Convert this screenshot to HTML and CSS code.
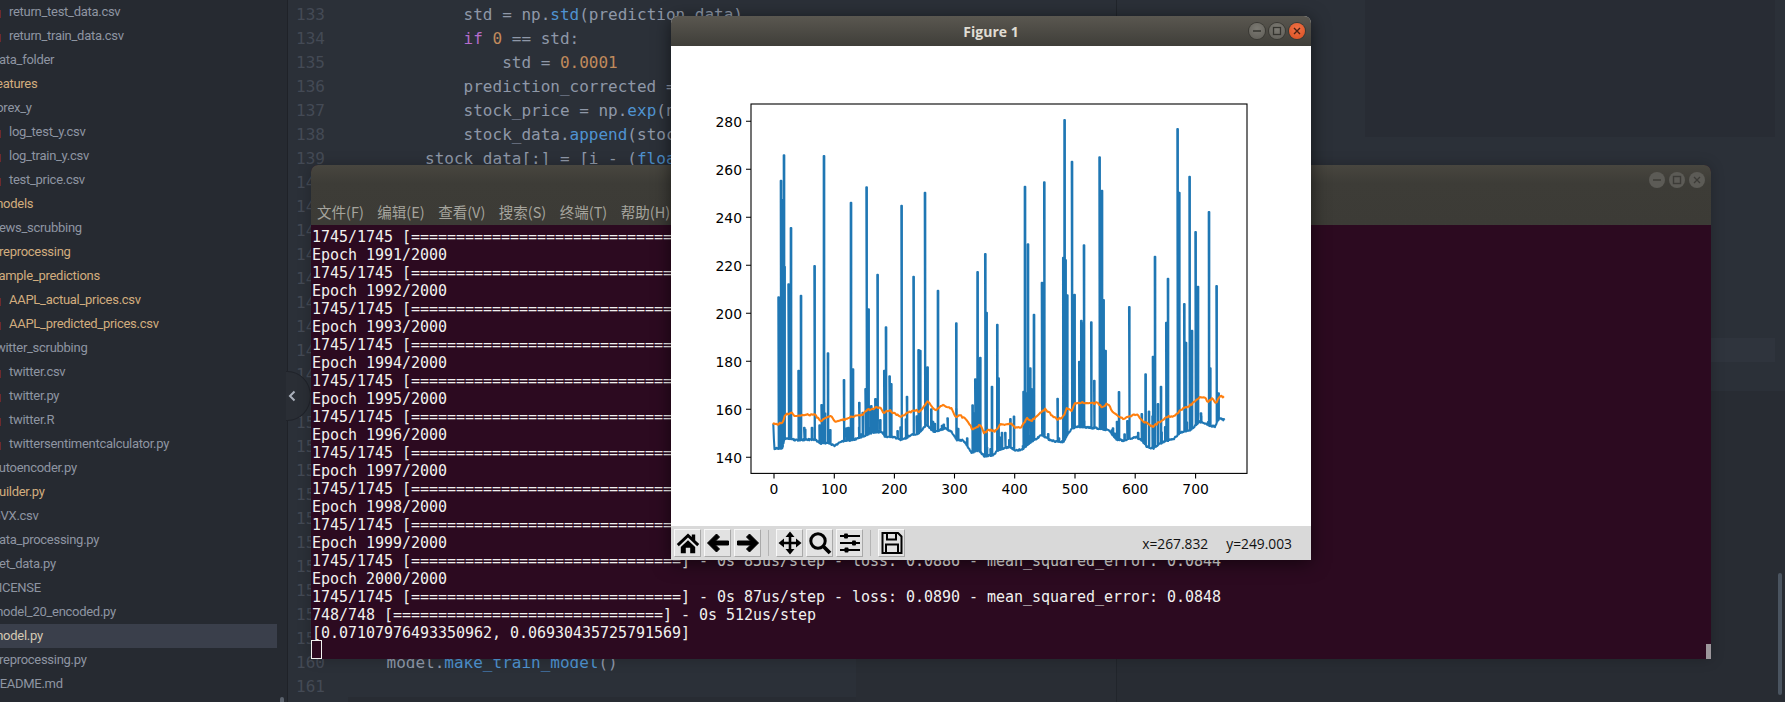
FILE: index.html
```html
<!DOCTYPE html>
<html lang="zh">
<head>
<meta charset="utf-8">
<title>Desktop</title>
<link rel="stylesheet" href="styles.css">
</head>
<body>
<div class="desktop">
  <div class="atom">
    <aside class="tree">
      <div class="row child">return_test_data.csv</div>
      <div class="row child">return_train_data.csv</div>
      <div class="row top">data_folder</div>
      <div class="row top mod">features</div>
      <div class="row top">forex_y</div>
      <div class="row child">log_test_y.csv</div>
      <div class="row child">log_train_y.csv</div>
      <div class="row child">test_price.csv</div>
      <div class="row top mod">models</div>
      <div class="row top">news_scrubbing</div>
      <div class="row top mod">preprocessing</div>
      <div class="row top mod">sample_predictions</div>
      <div class="row child mod">AAPL_actual_prices.csv</div>
      <div class="row child mod">AAPL_predicted_prices.csv</div>
      <div class="row top">twitter_scrubbing</div>
      <div class="row child">twitter.csv</div>
      <div class="row child">twitter.py</div>
      <div class="row child">twitter.R</div>
      <div class="row child">twittersentimentcalculator.py</div>
      <div class="row top">autoencoder.py</div>
      <div class="row top mod">builder.py</div>
      <div class="row top">GVX.csv</div>
      <div class="row top">data_processing.py</div>
      <div class="row top">get_data.py</div>
      <div class="row top">LICENSE</div>
      <div class="row top">model_20_encoded.py</div>
      <div class="row top selected">model.py</div>
      <div class="row top">preprocessing.py</div>
      <div class="row top">README.md</div>
      <div class="tree-thumb"></div>
    </aside>
    <div class="tree-toggle">
      <svg class="chevron" width="8" height="12" viewBox="0 0 8 12"><path d="M6.500 1.500 2 6l4.500 4.500" fill="none" stroke="#aab0bb" stroke-width="2"/></svg>
    </div>
    <main class="pane-left">
      <div class="gutter">
        <div>133</div><div>134</div><div>135</div><div>136</div><div>137</div><div>138</div><div>139</div><div>140</div><div>141</div><div>142</div><div>143</div><div>144</div><div>145</div><div>146</div><div>147</div><div>148</div><div>149</div><div>150</div><div>151</div><div>152</div><div>153</div><div>154</div><div>155</div><div>156</div><div>157</div><div>158</div><div>159</div><div>160</div><div>161</div>
      </div>
      <div class="code">
        <div>            std = np.<span class="fn">std</span>(prediction_data)</div>
        <div>            <span class="kw">if</span> <span class="num">0</span> == std:</div>
        <div>                std = <span class="num">0.0001</span></div>
        <div>            prediction_corrected = (prediction_data - np.<span class="fn">mean</span>(prediction_data)) / std * data_std/(std)</div>
        <div>            stock_price = np.<span class="fn">exp</span>(np.<span class="fn">log</span>(stock_data[-<span class="num">1</span>]) + prediction_corrected)</div>
        <div>            stock_data.<span class="fn">append</span>(stock_price)</div>
        <div>        stock_data[:] = [i - (<span class="fn">float</span>(stock_data[<span class="num">0</span>]) - <span class="num">1</span>) <span class="kw">for</span> i <span class="kw">in</span> stock_data]</div>
        <div class="blank"></div><div class="blank"></div><div class="blank"></div><div class="blank"></div><div class="blank"></div><div class="blank"></div><div class="blank"></div><div class="blank"></div><div class="blank"></div><div class="blank"></div><div class="blank"></div><div class="blank"></div><div class="blank"></div><div class="blank"></div><div class="blank"></div><div class="blank"></div><div class="blank"></div><div class="blank"></div><div class="blank"></div><div class="blank"></div>
        <div>    model.<span class="fn">make_train_model</span>()</div>
        <div class="blank"></div>
      </div>
      <div class="pane-corner"></div>
      <div class="hscroll"></div>
    </main>
    <section class="pane-right">
      <div class="panel-top"></div>
      <div class="active-line"></div>
      <div class="panel-bottom"></div>
      <div class="vscroll"></div>
    </section>
  </div>

  <div class="window terminal">
    <header class="term-head">
      <div class="term-buttons">
        <span class="dot dim"><svg width="16" height="16" viewBox="0 0 16 16"><path d="M4 8h8" stroke="#3c3b37" stroke-width="1.400"/></svg></span>
        <span class="dot dim"><svg width="16" height="16" viewBox="0 0 16 16"><rect x="4.500" y="4.500" width="7" height="7" fill="none" stroke="#3c3b37" stroke-width="1.400"/></svg></span>
        <span class="dot dim"><svg width="16" height="16" viewBox="0 0 16 16"><path d="M5 5l6 6M11 5l-6 6" stroke="#3c3b37" stroke-width="1.300"/></svg></span>
      </div>
      <nav class="term-menu">
        <span>文件(F)</span><span>编辑(E)</span><span>查看(V)</span><span>搜索(S)</span><span>终端(T)</span><span>帮助(H)</span>
      </nav>
    </header>
    <div class="term-body">
      <div>1745/1745 [==============================] - 0s 86us/step - loss: 0.0891 - mean_squared_error: 0.0849</div>
      <div>Epoch 1991/2000</div>
      <div>1745/1745 [==============================] - 0s 84us/step - loss: 0.0889 - mean_squared_error: 0.0847</div>
      <div>Epoch 1992/2000</div>
      <div>1745/1745 [==============================] - 0s 85us/step - loss: 0.0888 - mean_squared_error: 0.0846</div>
      <div>Epoch 1993/2000</div>
      <div>1745/1745 [==============================] - 0s 86us/step - loss: 0.0890 - mean_squared_error: 0.0848</div>
      <div>Epoch 1994/2000</div>
      <div>1745/1745 [==============================] - 0s 84us/step - loss: 0.0887 - mean_squared_error: 0.0845</div>
      <div>Epoch 1995/2000</div>
      <div>1745/1745 [==============================] - 0s 85us/step - loss: 0.0889 - mean_squared_error: 0.0847</div>
      <div>Epoch 1996/2000</div>
      <div>1745/1745 [==============================] - 0s 86us/step - loss: 0.0888 - mean_squared_error: 0.0846</div>
      <div>Epoch 1997/2000</div>
      <div>1745/1745 [==============================] - 0s 85us/step - loss: 0.0887 - mean_squared_error: 0.0845</div>
      <div>Epoch 1998/2000</div>
      <div>1745/1745 [==============================] - 0s 84us/step - loss: 0.0889 - mean_squared_error: 0.0847</div>
      <div>Epoch 1999/2000</div>
      <div>1745/1745 [==============================] - 0s 85us/step - loss: 0.0886 - mean_squared_error: 0.0844</div>
      <div>Epoch 2000/2000</div>
      <div>1745/1745 [==============================] - 0s 87us/step - loss: 0.0890 - mean_squared_error: 0.0848</div>
      <div>748/748 [==============================] - 0s 512us/step</div>
      <div>[0.07107976493350962, 0.06930435725791569]</div>
      <div><span class="cursor"></span></div>
      <div class="term-thumb"></div>
    </div>
  </div>

  <div class="window figure">
    <header class="fig-head">
      <span class="fig-title">Figure 1</span>
      <div class="fig-buttons">
        <span class="dot grey"><svg width="16" height="16" viewBox="0 0 16 16"><path d="M4 8h8" stroke="#35342f" stroke-width="1.400"/></svg></span>
        <span class="dot grey"><svg width="16" height="16" viewBox="0 0 16 16"><rect x="4.500" y="4.500" width="7" height="7" fill="none" stroke="#35342f" stroke-width="1.300"/></svg></span>
        <span class="dot red"><svg width="16" height="16" viewBox="0 0 16 16"><path d="M5 5l6 6M11 5l-6 6" stroke="#4a2012" stroke-width="1.400"/></svg></span>
      </div>
    </header>
    <svg class="canvas" width="640" height="480" viewBox="0 0 640 480">
      <rect width="640" height="480" fill="#fff"/>
      <path id="series-blue" fill="none" stroke="#1f77b4" stroke-width="2.080" stroke-linejoin="round"/>
      <path id="series-orange" fill="none" stroke="#ff7f0e" stroke-width="2.080" stroke-linejoin="round"/>
      <rect x="80" y="58" width="496" height="369.400" fill="none" stroke="#000" stroke-width="1.100"/>
      <path d="M75 75.300h5M75 123.300h5M75 171.300h5M75 219.300h5M75 267.300h5M75 315.300h5M75 363.300h5M75 411.300h5M103 427.400v5M163.300 427.400v5M223.400 427.400v5M283.500 427.400v5M343.700 427.400v5M404 427.400v5M464.200 427.400v5M524.600 427.400v5" stroke="#000" stroke-width="1.100"/>
      <g class="ylabels">
        <text x="71" y="80.500">280</text><text x="71" y="128.500">260</text><text x="71" y="176.500">240</text><text x="71" y="224.500">220</text><text x="71" y="272.500">200</text><text x="71" y="320.500">180</text><text x="71" y="368.500">160</text><text x="71" y="416.500">140</text>
      </g>
      <g class="xlabels">
        <text x="103" y="448">0</text><text x="163.300" y="448">100</text><text x="223.400" y="448">200</text><text x="283.500" y="448">300</text><text x="343.700" y="448">400</text><text x="404" y="448">500</text><text x="464.200" y="448">600</text><text x="524.600" y="448">700</text>
      </g>
    </svg>
    <footer class="toolbar">
      <button class="tool" aria-label="home"><svg viewBox="0 0 24 24" width="24" height="24"><path d="M12 2.500 0.800 13l2 2.200L12 6.600l9.200 8.600 2-2.200-4-3.700V3.500h-3.400v2.600Z"/><path d="M4.800 16 12 9.200l7.200 6.800v6.200h-5v-5.400H9.800v5.400h-5Z"/></svg></button>
      <button class="tool" aria-label="back"><svg viewBox="0 0 24 24" width="24" height="24"><path d="M1.500 12 10.500 3l3 3-4 4H22.500v4H9.500l4 4-3 3Z" stroke="#000" stroke-linejoin="round"/></svg></button>
      <button class="tool" aria-label="forward"><svg viewBox="0 0 24 24" width="24" height="24"><path d="M22.500 12 13.500 3l-3 3 4 4H1.500v4h13l-4 4 3 3Z" stroke="#000" stroke-linejoin="round"/></svg></button>
      <span class="tool-sep"></span>
      <button class="tool" aria-label="pan"><svg viewBox="0 0 24 24" width="24" height="24"><path d="M12 4v16M4 12h16" stroke="#000" stroke-width="2.600"/><path d="M12 .5 16.500 6h-9ZM12 23.500 7.500 18h9ZM.5 12 6 7.500v9ZM23.500 12 18 16.500v-9Z"/></svg></button>
      <button class="tool" aria-label="zoom"><svg viewBox="0 0 24 24" width="24" height="24"><circle cx="10" cy="10" r="7.200" fill="none" stroke="#000" stroke-width="3"/><path d="M15.500 15.500 22 22" stroke="#000" stroke-width="3.800"/></svg></button>
      <button class="tool" aria-label="configure"><svg viewBox="0 0 24 24" width="24" height="24"><path d="M2 5h20M2 12h20M2 19h20" stroke="#000" stroke-width="1.800"/><rect x="6" y="2.500" width="4" height="5" rx="1"/><rect x="14" y="9.500" width="4" height="5" rx="1"/><rect x="6.500" y="16.500" width="4" height="5" rx="1"/></svg></button>
      <span class="tool-sep"></span>
      <button class="tool" aria-label="save"><svg viewBox="0 0 24 24" width="24" height="24"><path d="M2.500 2H18l3.500 3.500V22h-19Z" fill="none" stroke="#000" stroke-width="2"/><path d="M7 2.500v6h9v-6M6 22v-8.500h12V22" fill="none" stroke="#000" stroke-width="2"/></svg></button>
      <span class="coords"><span>x=267.832</span><span>y=249.003</span></span>
    </footer>
  </div>
</div>
<script src="chart.js"></script>
</body>
</html>
```
FILE: styles.css
```css
* { box-sizing: border-box; }
html, body { margin: 0; height: 100%; overflow: hidden; background: #2b3038; }
.desktop { position: relative; width: 1785px; height: 702px; overflow: hidden; }

.atom { display: flex; width: 100%; height: 100%; }

.tree {
  position: relative;
  flex: 0 0 288px;
  height: 100%;
  background: #262a31;
  border-right: 1px solid #1f2228;
  overflow: hidden;
  font: 13px/24px Roboto, sans-serif;
  letter-spacing: -.28px;
  color: #8e95a2;
}
.row { position: relative; height: 24px; white-space: nowrap; margin-right: 10px; }
.row.child { padding-left: 9px; }
.row.child::before {
  content: "";
  position: absolute;
  left: 0; top: 10px;
  width: 1px; height: 8px;
  background: #6e2a2e;
}
.row.top { text-indent: -8px; overflow: hidden; }
.row.mod { color: #d2ad7e; }
.row.selected { background: #3a3f4b; color: #d4c9b4; }
.tree-thumb {
  position: absolute;
  left: 280px; top: 697px;
  width: 4px; height: 8px;
  border-radius: 2px;
  background: #5b626d;
}
.tree-toggle {
  position: absolute;
  left: 264px; top: 371px;
  width: 47px; height: 50px;
  border-radius: 50%;
  background: #2a2e35;
  border: 1px solid #20232a;
  clip-path: inset(-1px 0 -1px 22px);
  display: flex;
  align-items: center;
  justify-content: center;
  z-index: 1;
}
.chevron { margin-left: 14px; transform: translateX(-3px); }

.pane-left {
  position: relative;
  display: flex;
  flex: 0 0 829px;
  height: 100%;
  padding-top: 3px;
  background: #2b3038;
  border-right: 1px solid #21252b;
  overflow: hidden;
  font: 16px/24px "DejaVu Sans Mono", monospace;
}
.gutter { flex: 0 0 37px; text-align: right; color: #444a55; }
.code { flex: 1; padding-left: 23px; color: #8f98a8; position: relative; z-index: 1; }
.code div { height: 24px; white-space: pre; }
.fn { color: #4f93d1; }
.kw { color: #b56ccb; }
.num { color: #c08a5c; }
.pane-corner {
  position: absolute;
  left: 568px; right: 0; top: 659px; bottom: 0;
  background: #292d34;
}
.hscroll {
  position: absolute;
  left: 60px; width: 508px; bottom: 0; height: 5px;
  background: #282c33;
}

.pane-right {
  position: relative;
  flex: 1;
  display: flex;
  flex-direction: column;
  height: 100%;
  background: #2b3038;
}
.panel-top { height: 137px; margin: 0 10px 0 248px; background: #282c34; }
.active-line { height: 24px; margin: 201px 10px 0 0; background: #2f343d; }
.panel-bottom { flex: 1; margin: 29px 0 0; background: #282c33; }
.vscroll {
  position: absolute;
  right: 3px; top: 573px;
  width: 4px; height: 122px;
  border-radius: 2px;
  background: #4a5460;
}

.window { position: absolute; z-index: 2; }
.dot {
  display: flex;
  align-items: center;
  justify-content: center;
  width: 16px; height: 16px;
  border-radius: 50%;
}

.terminal {
  left: 311px; top: 165px;
  width: 1400px; height: 494px;
  display: flex;
  flex-direction: column;
  border-radius: 7px 7px 0 0;
  overflow: hidden;
  box-shadow: 0 0 14px rgba(0,0,0,.22);
  background: #2c0a20;
}
.term-head {
  flex: 0 0 60px;
  background: linear-gradient(#48463f 0, #3d3c37 18px, #3c3b36 100%);
  display: flex;
  flex-direction: column;
}
.term-buttons {
  display: flex;
  justify-content: flex-end;
  gap: 4px;
  padding: 7px 6px 0 0;
  height: 36px;
}
.dot.dim { background: #5c5b56; }
.term-menu {
  display: flex;
  gap: 13.5px;
  padding-left: 6px;
  font: 14.5px/22px "Noto Sans CJK SC", sans-serif;
  color: #a5a49d;
  white-space: nowrap;
}
.term-body {
  position: relative;
  flex: 1;
  min-height: 0;
  padding: 3px 0 0 1px;
  color: #f1f1ef;
  font: 15px/18px "DejaVu Sans Mono", monospace;
  letter-spacing: -.03px;
}
.term-body > div { height: 18px; white-space: pre; }
.cursor {
  display: block;
  width: 11px; height: 19px;
  margin: -2px 0 0 -1px;
  border: 1px solid #f1f1ef;
}
.term-body > .term-thumb {
  position: absolute;
  right: 0; bottom: 0;
  width: 5px;
  height: 15px;
  background: #9c969b;
}

.figure {
  left: 671px; top: 16px;
  width: 640px; height: 544px;
  border-radius: 7px 7px 0 0;
  box-shadow: 0 3px 18px rgba(0,0,0,.55);
  background: #d9d9d9;
  overflow: hidden;
}
.fig-head {
  position: relative;
  height: 30px;
  background: linear-gradient(#5a5750, #3f3e39);
  display: flex;
  align-items: center;
  justify-content: center;
}
.fig-title { font: 700 14px "Open Sans", sans-serif; color: #e0ddd4; }
.fig-buttons {
  position: absolute;
  right: 6px; top: 7px;
  display: flex;
  gap: 4px;
}
.dot.grey { background: radial-gradient(circle at 50% 35%, #7c7a73, #5e5c56); box-shadow: 0 0 0 1px #3a3934; }
.dot.red { background: radial-gradient(circle at 50% 35%, #f07247, #d94e1f); box-shadow: 0 0 0 1px #3a3934; }

.canvas { display: block; }
.canvas text { font-family: "DejaVu Sans", sans-serif; font-size: 13.9px; fill: #000; }
.ylabels text { text-anchor: end; }
.xlabels text { text-anchor: middle; }

.toolbar {
  display: flex;
  align-items: center;
  height: 34px;
  padding-left: 3px;
  gap: 3px;
  background: #d9d9d9;
}
.tool {
  width: 27px; height: 28px;
  padding: 0;
  display: flex;
  align-items: center;
  justify-content: center;
  background: #e2e2e2;
  border: 1px solid;
  border-color: #f8f8f8 #a9a9a9 #a9a9a9 #f8f8f8;
}
.tool svg { display: block; }
.tool-sep { width: 1px; height: 26px; margin: 0 4px; background: #b4b4b4; }
.coords {
  display: flex;
  gap: 18px;
  margin-left: auto;
  padding-right: 19px;
  font: 13.8px "Open Sans", sans-serif;
  color: #111;
  white-space: nowrap;
}
```
FILE: chart.js
```js
// Series traced from the figure, in crop coordinates: screen = origin + value / 3
var CANVAS_X = 671, CANVAS_Y = 46;

function crop(originX, pts) {
  var out = [];
  for (var i = 0; i < pts.length; i += 2) {
    out.push([originX + pts[i] / 3 - CANVAS_X, 100 + pts[i + 1] / 3 - CANVAS_Y]);
  }
  return out;
}

var baseline = crop(745, [85,973, 88,1045, 112,1045, 118,1018, 140,1015, 150,1020, 210,1018, 225,1030, 250,1028, 270,1037, 290,1025, 310,1022, 340,1015, 380,998, 410,995, 420,1010, 450,1012, 470,1020, 500,1005, 520,1000, 545,975, 570,998])
  .concat(crop(935, [0,995, 30,985, 50,995, 65,1020, 85,1020, 110,1058, 130,1050, 148,1068, 175,1065, 190,1050, 225,1040, 240,1050, 260,1050, 290,1025, 320,1005, 345,1020, 365,1025, 385,1025, 410,985, 430,980, 490,985, 520,990, 545,1018, 565,1022]))
  .concat(crop(1130, [0,1015, 20,1012, 35,1020, 50,1040, 70,1045, 100,1025, 130,1018, 150,998, 180,990, 210,965, 235,975, 255,980, 268,955, 284,960]));

var orangeKnots = crop(745, [83,973, 112,970, 120,945, 140,940, 152,948, 210,943, 228,965, 240,955, 258,950, 270,965, 300,958, 320,950, 350,945, 368,930, 405,920, 415,938, 435,932, 465,950, 490,938, 510,930, 525,935, 548,905, 570,932])
  .concat(crop(935, [0,932, 25,915, 50,925, 62,953, 75,945, 100,965, 112,990, 135,975, 148,1000, 160,988, 180,995, 195,975, 230,970, 240,982, 260,980, 275,955, 290,962, 330,928, 365,958, 385,950, 395,925, 410,932, 420,908, 490,910, 500,920, 520,910, 535,940, 565,955]))
  .concat(crop(1130, [0,948, 20,942, 40,965, 68,980, 90,965, 115,950, 135,948, 150,930, 175,920, 210,892, 225,895, 235,905, 245,895, 258,908, 270,888, 285,892]));

var spikes = crop(745, [100,592, 103,600, 107,242, 110,300, 113,300, 116,166, 118,500, 130,553, 133,560, 137,384, 160,812, 167,587, 177,983, 200,983, 208,498, 229,915, 236,168, 248,760, 255,990, 296,840, 304,985, 317,308, 323,808, 342,908, 361,867, 364,262, 370,628, 378,918, 385,930, 397,524, 405,960, 417,812, 422,682, 433,829, 438,852, 457,993, 469,317, 485,890, 505,530, 520,750, 525,752, 539,278, 547,802, 558,928])
  .concat(crop(935, [8,572, 37,955, 63,670, 112,916, 116,940, 120,838, 124,850, 127,516, 131,780, 135,773, 150,462, 154,638, 170,860, 186,674, 190,835, 200,998, 210,998, 222,1020, 265,875, 269,260, 274,880, 278,433, 285,805, 290,868, 296,644, 320,548, 324,560, 327,247, 367,896, 384,473, 388,60, 391,480, 396,586, 410,185, 414,590, 418,584, 432,785, 438,662, 442,670, 446,436, 468,667, 477,842, 493,172, 497,280, 500,272, 505,600, 511,752, 530,990, 545,965, 551,876, 568,1003, 582,621]))
  .concat(crop(1130, [46,823, 68,770, 71,775, 74,470, 83,912, 92,860, 108,668, 113,536, 142,87, 145,280, 147,278, 162,612, 167,728, 178,230, 182,700, 185,692, 196,396, 200,565, 203,560, 212,940, 236,336, 240,805, 259,558, 265,880]));

function interp(knots, x) {
  for (var i = 1; i < knots.length; i++) {
    if (x <= knots[i][0]) {
      var a = knots[i - 1], b = knots[i];
      var t = (x - a[0]) / ((b[0] - a[0]) || 1);
      return a[1] + (b[1] - a[1]) * t;
    }
  }
  return knots[knots.length - 1][1];
}

function toPath(points) {
  return "M" + points.map(function (p) { return p[0].toFixed(1) + " " + p[1].toFixed(1); }).join("L");
}

// Small repeatable generator for the fine noise around the traced shapes.
var seed = 20190;
function rnd() {
  seed = (seed * 1103515245 + 12345) % 2147483648;
  return seed / 2147483648;
}

var firstX = baseline[0][0], lastX = baseline[baseline.length - 1][0];
for (var nx = firstX + 10; nx < lastX; nx += 1.8) {
  if (rnd() < 0.22) {
    spikes.push([nx, interp(baseline, nx) - 3 - rnd() * rnd() * 38]);
  }
}
spikes.sort(function (p, q) { return p[0] - q[0]; });

var blue = [], k = 0;
for (var x = firstX; x <= lastX; x += 0.6) {
  blue.push([x, interp(baseline, x) + (rnd() - 0.5) * 1.6]);
  while (k < spikes.length && spikes[k][0] <= x) {
    blue.push([spikes[k][0], spikes[k][1]]);
    blue.push([spikes[k][0] + 0.6, spikes[k][1]]);
    blue.push([spikes[k][0] + 0.6, interp(baseline, x + 0.6)]);
    k++;
  }
}

var orange = [];
for (var ox = orangeKnots[0][0]; ox <= orangeKnots[orangeKnots.length - 1][0]; ox += 1.2) {
  orange.push([ox, interp(orangeKnots, ox) + (rnd() - 0.5) * 1.8]);
}

document.getElementById("series-blue").setAttribute("d", toPath(blue));
document.getElementById("series-orange").setAttribute("d", toPath(orange));
```
